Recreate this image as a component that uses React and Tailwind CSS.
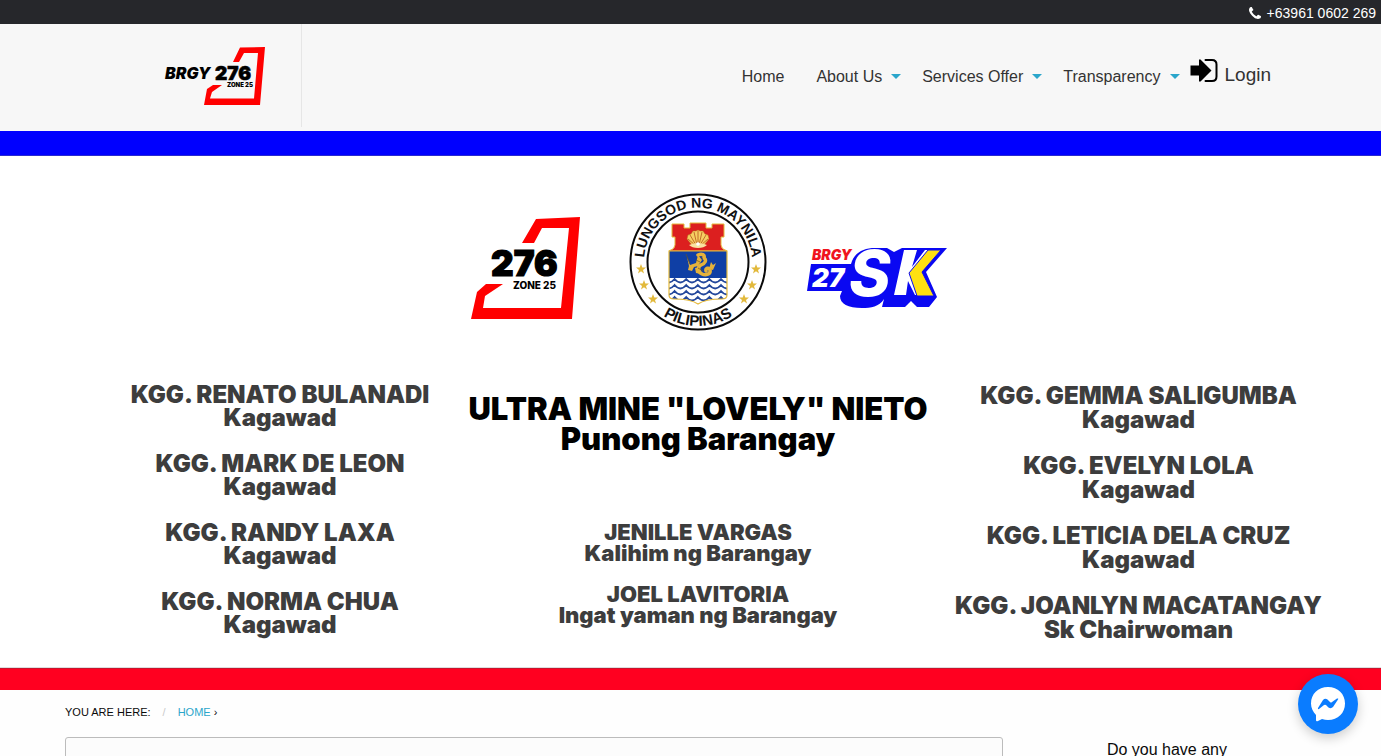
const menus = ["About Us", "Services Offer", "Transparency"];

const leftOfficials = [
  ["KGG. RENATO BULANADI", "Kagawad"],
  ["KGG. MARK DE LEON", "Kagawad"],
  ["KGG. RANDY LAXA", "Kagawad"],
  ["KGG. NORMA CHUA", "Kagawad"],
];

const rightOfficials = [
  ["KGG. GEMMA SALIGUMBA", "Kagawad"],
  ["KGG. EVELYN LOLA", "Kagawad"],
  ["KGG. LETICIA DELA CRUZ", "Kagawad"],
  ["KGG. JOANLYN MACATANGAY", "Sk Chairwoman"],
];

const staff = [
  ["JENILLE VARGAS", "Kalihim ng Barangay"],
  ["JOEL LAVITORIA", "Ingat yaman ng Barangay"],
];

function BrandLogo() {
  return (
    <svg viewBox="0 0 102 60" className="h-[60px] w-[102px]" role="img" aria-label="Barangay 276 Zone 25">
      <path
        fill="#ff0000"
        d="M76 1.500L101 1L96 59H40L43 43L49 39H58L48 46L46 52.500H90L94 7H80L75 16H69Z"
      />
      <g className="font-['Inter',sans-serif]" fill="#000">
        <text x="1" y="33" fontSize="16" fontWeight="900" fontStyle="italic">BRGY</text>
        <text x="51" y="34" fontSize="19" fontWeight="900" stroke="#000" strokeWidth=".6">276</text>
        <text x="63" y="41" fontSize="6" fontWeight="900">ZONE 25</text>
      </g>
    </svg>
  );
}

function ZoneLogo() {
  return (
    <svg viewBox="0 0 110 104" className="h-[104px] w-[110px]" role="img" aria-label="276 Zone 25">
      <path
        fill="#ff0000"
        d="M66 3L110 1L102 103H1L7 76L16 68H33L15 80L13 92H91L99 12H72L64 27H52Z"
      />
      <g className="font-['Inter',sans-serif]" fill="#000">
        <text x="21" y="60" fontSize="35" fontWeight="900" stroke="#000" strokeWidth="1.200">276</text>
        <text x="43" y="73" fontSize="10" fontWeight="800">ZONE 25</text>
      </g>
    </svg>
  );
}

const stars = [
  [-57, 7],
  [-54, 23],
  [-45, 37],
  [58, 7],
  [54, 23],
  [46, 37],
];

function CitySeal() {
  return (
    <svg viewBox="-70 -70 140 140" className="h-[140px] w-[140px]" role="img" aria-label="Lungsod ng Maynila seal">
      <defs>
        <path id="seal-top" d="M-53 10A54 54 0 1 1 53 10" />
        <path id="seal-bottom" d="M-64 0A64 64 0 0 0 64 0" />
        <clipPath id="shield">
          <path d="M-29 -11H29V33Q29 37 24 37Q7 37 0 42Q-7 37 -24 37Q-29 37 -29 33Z" />
        </clipPath>
      </defs>
      <circle r="67.500" fill="#fff" stroke="#0a0a0a" strokeWidth="2" />
      <circle r="50.500" fill="#fff" stroke="#0a0a0a" strokeWidth="2" />
      <g className="font-['Liberation_Sans',sans-serif]" fill="#111" fontWeight="700" textAnchor="middle">
        <text fontSize="14">
          <textPath href="#seal-top" startOffset="50%">LUNGSOD NG MAYNILA</textPath>
        </text>
        <text fontSize="15">
          <textPath href="#seal-bottom" startOffset="50%">PILIPINAS</textPath>
        </text>
      </g>
      {stars.map(([x, y]) => (
        <path
          key={`${x},${y}`}
          transform={`translate(${x} ${y})`}
          fill="#e2b93b"
          d="M0 -5L1.300 -1.500L5 -1.400L2 .9L3 4.400L0 2.300L-3 4.400L-2 .9L-5 -1.400L-1.300 -1.500Z"
        />
      ))}
      <path
        fill="#dc1f1f"
        stroke="#e5b93a"
        strokeWidth="1"
        d="M-26 -38H-14V-34H-8V-39H8V-34H14V-38H26V-25H23V-17Q23 -13 29 -11H-29Q-23 -13 -23 -17V-25H-26Z"
      />
      <g clipPath="url(#shield)">
        <rect x="-29" y="-11" width="58" height="28" fill="#0f3fa5" />
        <rect x="-29" y="16" width="58" height="30" fill="#fff" />
        {[17, 23, 29, 35].map((y) => (
          <path
            key={y}
            d={`M-35 ${y}q5.800 7 11.600 0q5.800 7 11.600 0q5.800 7 11.600 0q5.800 7 11.600 0q5.800 7 11.600 0q5.800 7 11.600 0`}
            fill="none"
            stroke="#24489c"
            strokeWidth="1.800"
          />
        ))}
      </g>
      <path
        d="M-29 -11H29V33Q29 37 24 37Q7 37 0 42Q-7 37 -24 37Q-29 37 -29 33Z"
        fill="none"
        stroke="#e5b93a"
        strokeWidth="1.200"
      />
      <path
        d="M0 -16L-6 -17L-11 -23L-10 -27L-7 -28L-5 -31L-2 -31L0 -32L2 -31L5 -31L7 -28L10 -27L11 -23L6 -17Z"
        fill="#f6cf62"
        stroke="#b5701c"
        strokeWidth=".5"
      />
      <path
        d="M0 -17V-31M-1 -17L-4 -30M1 -17L4 -30M-2 -17L-8 -27M2 -17L8 -27M-3 -17L-10 -23M3 -17L10 -23"
        stroke="#b5541d"
        strokeWidth=".8"
      />
      <path d="M-9 -17Q0 -21 9 -17Q6 -14 0 -14Q-6 -14 -9 -17Z" fill="#f9e2a0" />
      <circle cy="-18" r="1.800" fill="#fff" />
      <path
        d="M0 -7C4 -9 7 -7 6 -4C9 -2 7 2 3 3C-1 5 0 10 4 12C8 14 13 12 12 8C11 5 7 6 8 9"
        fill="none"
        stroke="#e5b23a"
        strokeWidth="3.500"
        strokeLinecap="round"
      />
      <path
        d="M-11 -5L-8 3L-2 1L0 -7L4 -2L0 4L-4 5L-6 9L-10 8L-9 4ZM-3 6L2 5L3 12L-2 11ZM11 7L13 0L15 3L18 1L15 8Z"
        fill="#e5b23a"
      />
      <path d="M-12 -8L-8 2M-2 -2L2 0M0 6L5 9M3 -5L5 -3" stroke="#6b5520" strokeWidth=".7" />
    </svg>
  );
}

function YouthLogo() {
  return (
    <svg viewBox="0 0 142 66" className="h-[66px] w-[142px] overflow-visible" role="img" aria-label="Barangay 27 SK">
      <path
        fill="#0a08f2"
        d="M5 18H45C48 7 57 2 69 2H81L88 6L96 2H141L120 26L131 51L123 61H111L105 55L99 61H76L78 53C73 61 65 62 56 62C42 62 34 58 34 50L36 45H1Z"
      />
      <g className="font-['Inter',sans-serif]">
        <text x="6" y="14" fontSize="14" fontWeight="900" fontStyle="italic" fill="#f0141e">BRGY</text>
        <text x="6" y="41" fontSize="26" fontWeight="900" fontStyle="italic" fill="#fff">27</text>
        <text x="43" y="50" fontSize="63" fontWeight="800" fontStyle="italic" fill="#fff">S</text>
      </g>
      <path fill="#fff" d="M98 4H111L106 21L119 4H133L114 26L124 49H109L102 35L100 49H88Z" />
      <path fill="#ffe011" stroke="#0a08f2" strokeWidth="1" d="M122 4H135L116 26L128 50H111L103 27Z" />
    </svg>
  );
}

function PhoneIcon() {
  return (
    <svg viewBox="0 0 1408 1408" className="h-3 w-3" aria-hidden="true">
      <path
        fill="currentColor"
        d="M1408 1112q0 27-10 70.500t-21 68.500q-21 50-122 106-94 51-186 51-27 0-53-3.500t-57.500-12.500-47-14.500-55.500-20.500-49-18q-98-35-175-83-127-79-264-216t-216-264q-48-77-83-175-3-9-18-49t-20.500-55.500-14.500-47-12.500-57.500-3.500-53q0-92 51-186 56-101 106-122 25-11 68.500-21t70.500-10q14 0 21 3 18 6 53 76 11 19 30 54t35 63.500 31 53.500q3 4 17.500 25t21.500 35.500 7 28.500q0 20-28.500 50t-62 55-62 53-28.500 46q0 9 5 22.500t8.500 20.500 14 24 11.500 19q76 137 174 235t235 174q2 1 19 11.500t24 14 20.500 8.500 22.500 5q18 0 46-28.500t53-62 55-62 50-28.500q14 0 28.500 7t35.500 21.500 25 17.500q25 15 53.500 31t63.500 35 54 30q70 35 76 53 3 7 3 21z"
      />
    </svg>
  );
}

function LoginIcon() {
  return (
    <svg viewBox="0 1 28 26" className="h-[26px] w-7" aria-hidden="true">
      <path d="M.5 7.500H9V1.500H10.500L21.500 12.500L10.500 23.500H9V17.500H.5Z" fill="#000" />
      <path
        d="M15.500 2H22Q26.500 2 26.500 6.500V18.500Q26.500 23 22 23H15.500"
        fill="none"
        stroke="#000"
        strokeWidth="2"
        strokeLinecap="round"
      />
    </svg>
  );
}

function OfficialList({ people, className }) {
  return (
    <ul className={className}>
      {people.map(([name, role]) => (
        <li key={name}>
          <p>{name}</p>
          <p>{role}</p>
        </li>
      ))}
    </ul>
  );
}

export default function App() {
  return (
    <div className="min-h-screen bg-[#fefefe] font-['Liberation_Sans',Arial,sans-serif] text-[#0a0a0a]">
      <div className="flex h-6 items-center justify-end bg-[#26272b] px-[5px] text-sm text-white">
        <a href="tel:+639610602269" className="flex items-center gap-[6px] pt-[2px]">
          <PhoneIcon />
          +63961 0602 269
        </a>
      </div>

      <header className="flex h-[107px] justify-between bg-[#f7f7f7] pr-[110px] pl-[164px]">
        <a href="#home" className="mb-1 flex items-center border-r border-[#e6e6e6] pr-[35px]">
          <BrandLogo />
        </a>
        <nav className="flex items-center pb-[2px] text-[#333]">
          <a href="#home" className="px-4 leading-6">Home</a>
          {menus.map((label) => (
            <button key={label} type="button" className="flex items-center gap-[9px] pr-[5px] pl-4 leading-6">
              {label}
              <svg viewBox="0 0 10 5" className="h-[5px] w-[10px]" aria-hidden="true">
                <path d="M0 0H10L5 5Z" fill="#2ba6cb" />
              </svg>
            </button>
          ))}
          <a href="#login" className="flex items-start gap-[7px] pb-1 pl-[5px] text-[19px] leading-8">
            <LoginIcon />
            Login
          </a>
        </nav>
      </header>

      <div className="h-[25px] border-b border-[#2a2ad0] bg-[#0000ff]" />

      <main>
        <section className="min-h-[512px] border-b border-[#dddddd] bg-white pt-9 font-['Inter',sans-serif] font-black text-[#3d3d3d]">
          <div className="flex justify-center gap-[38px] pl-9">
            <div className="flex gap-12">
              <div className="pt-6"><ZoneLogo /></div>
              <CitySeal />
            </div>
            <div className="pt-[54px]"><YouthLogo /></div>
          </div>
          <div className="grid grid-cols-[460fr_476fr_445fr] text-center whitespace-nowrap">
            <OfficialList
              people={leftOfficials}
              className="flex flex-col gap-[23px] pt-[51px] pl-[100px] text-2xl leading-[23px]"
            />
            <div className="flex flex-col items-center pt-[62px]">
              <h1 className="text-[31px] leading-[30px] text-black">
                ULTRA MINE "LOVELY" NIETO
                <br />
                Punong Barangay
              </h1>
              <OfficialList
                people={staff}
                className="flex flex-col gap-5 pt-[68px] text-[22px] leading-[21px]"
              />
            </div>
            <OfficialList
              people={rightOfficials}
              className="flex flex-col gap-[22px] pt-[52px] pr-10 text-2xl leading-6"
            />
          </div>
        </section>

        <div className="h-[22px] border-t border-[#c8142c] bg-[#ff0020]" />

        <nav aria-label="Breadcrumb" className="px-[65px] pt-[14px]">
          <ol className="flex text-[11px] leading-4 uppercase">
            <li>You are here:</li>
            <li className="px-3 text-[#cacaca]" aria-hidden="true">/</li>
            <li><a href="#home" className="text-[#2ba6cb]">Home</a> ›</li>
          </ol>
        </nav>

        <div className="flex items-start justify-between pt-[17px] pr-[154px] pl-[65px]">
          <section aria-label="Content" className="min-h-24 max-w-[938px] flex-1 rounded-[3px] border border-[#bcbcbc] bg-[#fcfcfc]" />
          <aside className="pt-px leading-6">Do you have any</aside>
        </div>
      </main>

      <button
        type="button"
        aria-label="Open Messenger chat"
        className="fixed right-[23px] bottom-[22px] flex h-[60px] w-[60px] items-center justify-center rounded-full bg-[#0a7cff] shadow-[0_4px_12px_rgba(0,0,0,0.2)]"
      >
        <svg viewBox="0 0 36 36" className="h-9 w-9" aria-hidden="true">
          <path fill="#fff" d="M18 1C8 1 1 8 1 17.500C1 22 3 26 6 29V34Q6 36 8 35L12 33Q15 34 18 34C28 34 35 27 35 17.500C35 8 28 1 18 1Z" />
          <path fill="#0a7cff" d="M8 22L13 14Q15 12 17.500 13.500L20 16Q21 17 22 16L27 12.500Q29 12 28 13.500L23 21Q21 23 18.500 21.500L16 19Q15 18.500 14 19L9 23Q7.500 23.500 8 22Z" />
        </svg>
      </button>
    </div>
  );
}
